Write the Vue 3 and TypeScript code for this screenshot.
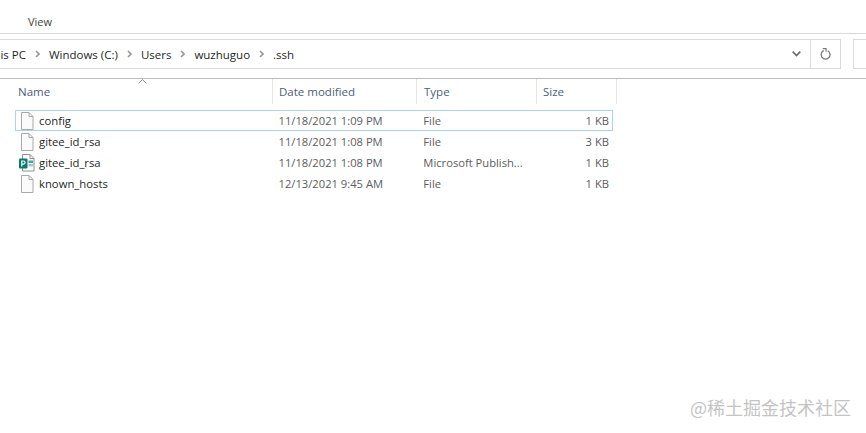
<template>
  <div class="explorer">
    <div class="ribbon"><span class="tab">View</span></div>
    <div class="address-row">
      <div class="address">
        <div class="crumbs">
          <template v-for="(part, i) in path" :key="part">
            <svg v-if="i > 0" class="sep" width="5" height="8" viewBox="0 0 5 8">
              <path d="M1 1l3 3-3 3" fill="none" stroke="#979797" stroke-width="1.6" />
            </svg>
            <span>{{ part }}</span>
          </template>
        </div>
        <svg class="chevron" width="9" height="6" viewBox="0 0 9 6">
          <path d="M.7.7L4.500 4.500 8.300.7" fill="none" stroke="#6d6d6d" stroke-width="1.7" />
        </svg>
        <div class="refresh">
          <svg width="11" height="12" viewBox="0 0 11 12">
            <path d="M3.700 2.700A4.400 4.400 0 1 0 7.700 2.800" fill="none" stroke="#7b7b7b" stroke-width="1.300" />
            <path d="M2.800.7h3.300v3.100" fill="none" stroke="#7b7b7b" stroke-width="1.200" />
          </svg>
        </div>
      </div>
      <div class="search"></div>
    </div>

    <div class="list">
      <div class="head">
        <div class="col name">
          Name
          <svg class="sort" width="9" height="5" viewBox="0 0 9 5">
            <path d="M.5 4.500l4-4 4 4" fill="none" stroke="#8c8c8c" />
          </svg>
        </div>
        <div class="col date">Date modified</div>
        <div class="col type">Type</div>
        <div class="col size">Size</div>
      </div>
      <div
        v-for="(f, i) in files"
        :key="i"
        class="row"
        :class="{ focused: i === 0 }"
      >
        <div class="cell name">
          <svg v-if="f.publisher" class="icon" width="16" height="18" viewBox="0 0 16 18">
            <path d="M3.500.5h7.500l4 4v12.500h-11.500z" fill="#fff" stroke="#8f8f8f" />
            <path d="M11 .5v4h4" fill="none" stroke="#8f8f8f" />
            <rect x="9.500" y="6.500" width="4.500" height="2.500" fill="#41a5a0" />
            <rect x="9.500" y="10" width="4.500" height="2.500" fill="#8fd0cc" />
            <rect x="0" y="4.500" width="8.500" height="10" rx="1" fill="#0c7a6e" />
            <path d="M2.800 12.500V7h1.700a1.500 1.500 0 0 1 0 3.100H2.800" fill="none" stroke="#fff" stroke-width="1.200" />
          </svg>
          <svg v-else class="icon" width="16" height="18" viewBox="0 0 16 18">
            <path d="M2.500.5h7.500l4 4v13h-11.500z" fill="#fbfbfb" stroke="#a8a8a8" />
            <path d="M10 .5v4h4" fill="none" stroke="#a8a8a8" />
          </svg>
          <span class="file-name">{{ f.name }}</span>
        </div>
        <div class="cell date">{{ f.date }}</div>
        <div class="cell type">{{ f.type }}</div>
        <div class="cell size">{{ f.size }}</div>
      </div>
    </div>
    <div class="mark">@稀土掘金技术社区</div>
  </div>
</template>

<script setup lang="ts">
interface FileRow {
  name: string;
  date: string;
  type: string;
  size: string;
  publisher?: boolean;
}

const path = ["This PC", "Windows (C:)", "Users", "wuzhuguo", ".ssh"];

const files: FileRow[] = [
  { name: "config", date: "11/18/2021 1:09 PM", type: "File", size: "1 KB" },
  { name: "gitee_id_rsa", date: "11/18/2021 1:08 PM", type: "File", size: "3 KB" },
  { name: "gitee_id_rsa", date: "11/18/2021 1:08 PM", type: "Microsoft Publish...", size: "1 KB", publisher: true },
  { name: "known_hosts", date: "12/13/2021 9:45 AM", type: "File", size: "1 KB" },
];
</script>

<style>
html,
body {
  margin: 0;
  background: #fff;
}
</style>

<style scoped>
.explorer {
  position: relative;
  width: 866px;
  height: 433px;
  overflow: hidden;
  background: #fff;
  font-family: "Open Sans", "Noto Sans", sans-serif;
  font-size: 11.5px;
  color: #1f1f1f;
}
.ribbon {
  height: 34px;
  box-sizing: border-box;
  border-bottom: 1px solid #dadada;
  padding: 14px 0 0 28px;
  line-height: 15px;
}
.tab {
  color: #444;
  font-size: 11px;
}
.address-row {
  display: flex;
  height: 45px;
  box-sizing: border-box;
  padding-top: 5px;
  border-bottom: 1px solid #bcbcbc;
}
.address {
  flex: none;
  width: 841px;
  height: 30px;
  box-sizing: border-box;
  border: 1px solid #d9d9d9;
  border-left: none;
  display: flex;
  align-items: center;
  overflow: hidden;
}
.crumbs {
  flex: 1;
  display: flex;
  align-items: center;
  gap: 9px;
  margin-left: -13px;
  white-space: nowrap;
}
.sep {
  flex: none;
}
.chevron {
  margin-right: 9px;
}
.refresh {
  width: 29px;
  height: 100%;
  border-left: 1px solid #d9d9d9;
  display: flex;
  align-items: center;
  justify-content: center;
}
.search {
  flex: none;
  margin-left: 12px;
  width: 20px;
  height: 30px;
  box-sizing: border-box;
  border: 1px solid #d9d9d9;
  border-right: none;
}
.list {
  padding-left: 15px;
}
.head {
  display: flex;
  height: 25px;
  color: #4c607a;
  line-height: 25px;
}
.col {
  box-sizing: border-box;
  border-right: 1px solid #e5e5e5;
  padding-left: 6px;
  position: relative;
}
.col.name {
  padding-left: 3px;
}
.col.type {
  padding-left: 7px;
}
.sort {
  position: absolute;
  left: 123px;
  top: 0;
}
.name {
  width: 258px;
}
.date {
  width: 144px;
}
.type {
  width: 120px;
}
.size {
  width: 80px;
}
.row {
  display: flex;
  width: 598px;
  height: 21px;
  box-sizing: border-box;
  align-items: center;
  border: 1px solid transparent;
  font-size: 11.2px;
  color: #5c5c5c;
}
.head + .row {
  margin-top: 6px;
}
.row.focused {
  border-color: #a8d6ea;
}
.cell {
  box-sizing: border-box;
  white-space: nowrap;
}
.cell.name {
  width: 257px;
  display: flex;
  align-items: center;
  padding-left: 3px;
  font-size: 11.3px;
  color: #1f1f1f;
}
.cell.date {
  padding-left: 6px;
}
.cell.type {
  padding-left: 7px;
}
.cell.size {
  width: 76px;
  text-align: right;
  padding-right: 3px;
}
.icon {
  flex: none;
}
.file-name {
  margin-left: 4px;
}
.mark {
  position: absolute;
  right: 15px;
  top: 395px;
  font-family: "Noto Sans CJK SC", sans-serif;
  font-size: 18px;
  line-height: 24px;
  color: #c4c4c4;
}
</style>
